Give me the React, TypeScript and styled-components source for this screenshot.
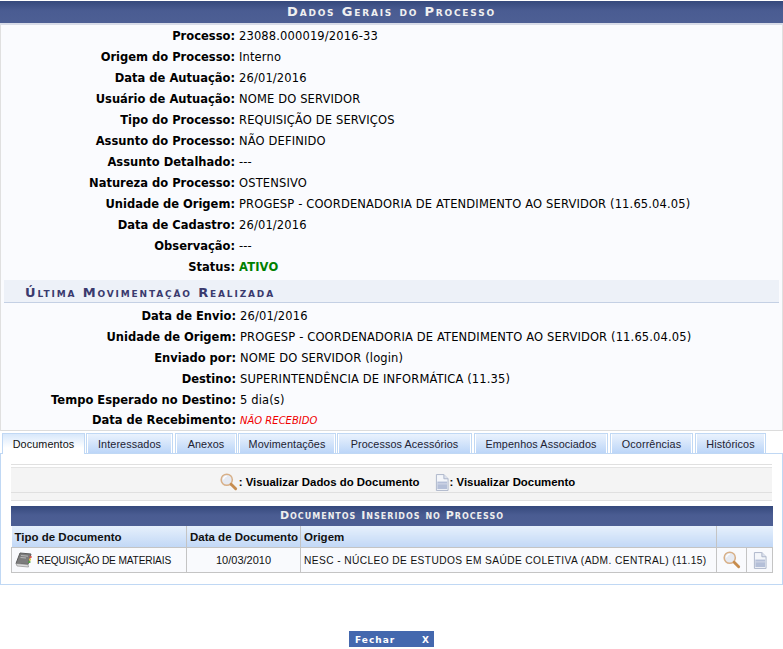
import React from "react";
import styled, { createGlobalStyle } from "styled-components";

const Global = createGlobalStyle`
  html, body { margin: 0; padding: 0; background: #fff; }
  body { font-family: "DejaVu Sans", Verdana, sans-serif; font-size: 11.5px; color: #000; }
`;

const Page = styled.div`
  width: 783px;
  height: 649px;
  overflow: hidden;
  display: flex;
  flex-direction: column;
`;

const Panel = styled.section`
  background: #fafbfe;
  border-right: 1px solid #e0e0e0;
  border-left: 1px solid #e0e0e0;
  border-bottom: 1px solid #dcdcdc;
  height: 430px;
  box-sizing: border-box;
  margin-top: 1px;
`;

const TitleBar = styled.h2`
  margin: 0 -1px;
  height: 22px;
  line-height: 22px;
  text-align: center;
  color: #f0f0f0;
  font-size: 13px;
  font-weight: bold;
  font-variant: small-caps;
  letter-spacing: 1.8px;
  background: linear-gradient(#35497c 0%, #4a5c92 45%, #4d5f94 100%);
  border-bottom: 2px solid #d8dce8;
`;

const Details = styled.dl<{ $label: number }>`
  margin: 0;
  display: grid;
  grid-template-columns: ${(p) => p.$label}px 1fr;
  grid-auto-rows: 21px;
  column-gap: 4px;
  line-height: 22px;
`;

const Label = styled.dt`
  margin: 0;
  font-weight: bold;
  text-align: right;
  white-space: nowrap;
`;

const Value = styled.dd`
  margin: 0;
  white-space: nowrap;
  letter-spacing: 0.14px;
`;

const MovementDetails = styled(Details)`
  & > :nth-last-child(-n + 2) {
    line-height: 20px;
  }
`;

const Active = styled.span`
  color: #008000;
  font-weight: bold;
`;

const NotReceived = styled.span`
  color: #f00000;
  font-style: italic;
  font-size: 10px;
  letter-spacing: 0;
`;

const Subtitle = styled.h3`
  margin: 3px 3px 2px 3px;
  height: 22px;
  line-height: 25px;
  padding-left: 21px;
  font-size: 13px;
  font-weight: bold;
  font-variant: small-caps;
  letter-spacing: 1.85px;
  color: #3a3a6e;
  background: #edf1f8;
  border-bottom: 1px solid #c4d0e4;
`;

const Tabs = styled.div`
  display: flex;
  align-items: flex-end;
  height: 22px;
  padding-left: 2px;
  position: relative;
  z-index: 1;
`;

const Tab = styled.div<{ $active?: boolean; $w: number; $gap: number }>`
  box-sizing: border-box;
  width: ${(p) => p.$w}px;
  margin-right: ${(p) => p.$gap}px;
  height: ${(p) => (p.$active ? 21 : 20)}px;
  margin-bottom: ${(p) => (p.$active ? -1 : 0)}px;
  border: 1px solid #c0d8f4;
  border-bottom: none;
  text-align: center;
  font-family: "Liberation Sans", Arial, sans-serif;
  font-size: 10.8px;
  letter-spacing: 0.1px;
  line-height: 20px;
  color: ${(p) => (p.$active ? "#111" : "#223")};
  background: ${(p) => (p.$active ? "linear-gradient(#d8e8fb, #fff 70%)" : "linear-gradient(#eaf2fd, #bcd6f8)")};
  box-shadow: ${(p) => (p.$active ? "none" : "inset 1px 0 0 #fff, inset -1px 0 0 #fff")};
  white-space: nowrap;
`;

const TabBody = styled.div`
  box-sizing: border-box;
  height: 132px;
  border: 1px solid #c0d8f4;
  padding: 10px 10px 0 10px;
  background: #fff;
`;

const Legend = styled.div`
  box-sizing: border-box;
  height: 37px;
  margin-bottom: 5px;
  padding-top: 2px;
  border-top: 1px solid #e0e0e0;
  border-bottom: 1px solid #e0e0e0;
  background: linear-gradient(#fff 3px, #f4f4f4 3px);
`;

const LegendBar = styled.div`
  box-sizing: border-box;
  height: 26px;
  padding: 4px 0 0 12px;
  display: flex;
  justify-content: center;
  align-items: center;
  gap: 15px;
  background: #f4f4f4;
  border-top: 1px solid #e4e4e4;
  border-bottom: 1px solid #e0e0e0;
  font-family: "Liberation Sans", Arial, sans-serif;
  font-size: 11.4px;
  font-weight: bold;
`;

const LegendItem = styled.span`
  display: inline-flex;
  align-items: center;
  gap: 1px;
`;

const DocTable = styled.table`
  width: 761px;
  border-collapse: collapse;
  table-layout: fixed;
  font-family: "Liberation Sans", Arial, sans-serif;
  font-size: 11px;
`;

const TableCaption = styled.caption`
  height: 20px;
  line-height: 20px;
  text-align: center;
  color: #eee;
  font-family: "DejaVu Sans", Verdana, sans-serif;
  font-size: 11px;
  font-weight: bold;
  font-variant: small-caps;
  letter-spacing: 1px;
  background: linear-gradient(#35497c 0%, #4a5c92 45%, #4d5f94 100%);
`;

const Th = styled.th`
  height: 21px;
  padding: 0 3px;
  text-align: left;
  font-family: "Liberation Sans", Arial, sans-serif;
  font-size: 11.5px;
  font-weight: bold;
  color: #111;
  white-space: nowrap;
  background: linear-gradient(#e6f0fc, #c2d8f6);
  border-left: 1px solid #c4c4c4;
  border-right: 1px solid #c4c4c4;
  border-bottom: 1px solid #c4c4c4;
  &:first-child { border-left: none; }
  &:last-child { border-right: none; }
`;

const Td = styled.td<{ $date?: boolean; $spacing?: number }>`
  height: 25px;
  padding: 0 3px;
  box-sizing: border-box;
  text-align: ${(p) => (p.$date ? "center" : "left")};
  white-space: nowrap;
  background: #f9fafd;
  color: #111;
  border: 1px solid #c4c4c4;
  border-top: none;
  font-size: ${(p) => (p.$date ? 11 : 10.2)}px;
  letter-spacing: ${(p) => p.$spacing ?? 0}px;
`;

const IconCell = styled(Td)`
  padding: 0;
  text-align: center;
  svg { display: block; margin: 0 auto; }
`;

const TypeCell = styled.span`
  display: flex;
  align-items: center;
  gap: 4px;
`;

const Footer = styled.div`
  display: flex;
  justify-content: center;
  margin-top: 46px;
`;

const CloseButton = styled.button`
  width: 85px;
  height: 16px;
  margin: 0;
  padding: 1px 4px 0 6px;
  border: none;
  background: #4468ae;
  color: #fff;
  display: flex;
  justify-content: space-between;
  align-items: center;
  font-family: "DejaVu Sans", Verdana, sans-serif;
  font-size: 9px;
  font-weight: bold;
  letter-spacing: 1px;
`;

const Magnifier = () => (
  <svg width="18" height="18" viewBox="0 0 20 20">
    <circle cx="7.5" cy="7.5" r="6.2" fill="#e6eaf2" stroke="#d8b088" strokeWidth="1.7" />
    <path d="M3.8 7 A4 4 0 0 1 7.5 3.6" fill="none" stroke="#fff" strokeWidth="1.3" />
    <path d="M12.4 12.4 L17.4 17.4" stroke="#c68c4e" strokeWidth="3.2" strokeLinecap="round" />
  </svg>
);

const DocIcon = () => (
  <svg width="14" height="17" viewBox="0 0 15 18">
    <path d="M1.5 .5 H9.5 L14 5 V17.5 H1.5 Z" fill="#f4f6fa" stroke="#aab4c8" />
    <path d="M9.5 .5 V5 H14" fill="#dce2ee" stroke="#aab4c8" />
    <rect x="2.5" y="8" width="10.5" height="8" fill="#b4bfd8" />
    <rect x="2.5" y="10" width="10.5" height="1" fill="#d6dcea" />
  </svg>
);

const BookIcon = () => (
  <svg width="18" height="16" viewBox="0 0 18 16">
    <path d="M5 1 L16 2 L13 12.5 L1 11.5 Z" fill="#7c7c7c" stroke="#5c5c5c" />
    <path d="M1 11.5 L13 12.5 L13.5 15 L2 14 Z" fill="#dcdcdc" stroke="#808080" strokeWidth=".6" />
    <path d="M6 3.5 L13 4.2 M5.5 5.5 L11 6" stroke="#b8b8b8" />
    <rect x="14.6" y="4" width="2" height="2" fill="#d9534f" />
    <rect x="14" y="6.5" width="2" height="2" fill="#e8c440" />
    <rect x="13.4" y="9" width="2" height="2" fill="#5aa84a" />
  </svg>
);

const general: [string, React.ReactNode][] = [
  ["Processo:", "23088.000019/2016-33"],
  ["Origem do Processo:", "Interno"],
  ["Data de Autuação:", "26/01/2016"],
  ["Usuário de Autuação:", "NOME DO SERVIDOR"],
  ["Tipo do Processo:", "REQUISIÇÃO DE SERVIÇOS"],
  ["Assunto do Processo:", "NÃO DEFINIDO"],
  ["Assunto Detalhado:", "---"],
  ["Natureza do Processo:", "OSTENSIVO"],
  ["Unidade de Origem:", "PROGESP - COORDENADORIA DE ATENDIMENTO AO SERVIDOR (11.65.04.05)"],
  ["Data de Cadastro:", "26/01/2016"],
  ["Observação:", "---"],
  ["Status:", <Active>ATIVO</Active>],
];

const movement: [string, React.ReactNode][] = [
  ["Data de Envio:", "26/01/2016"],
  ["Unidade de Origem:", "PROGESP - COORDENADORIA DE ATENDIMENTO AO SERVIDOR (11.65.04.05)"],
  ["Enviado por:", "NOME DO SERVIDOR (login)"],
  ["Destino:", "SUPERINTENDÊNCIA DE INFORMÁTICA (11.35)"],
  ["Tempo Esperado no Destino:", "5 dia(s)"],
  ["Data de Recebimento:", <NotReceived>NÃO RECEBIDO</NotReceived>],
];

const tabs: [string, number, number][] = [
  ["Documentos", 83, 1],
  ["Interessados", 87, 2],
  ["Anexos", 62, 1],
  ["Movimentações", 98, 1],
  ["Processos Acessórios", 135, 2],
  ["Empenhos Associados", 134, 2],
  ["Ocorrências", 83, 2],
  ["Históricos", 71, 0],
];

const renderRows = (rows: [string, React.ReactNode][]) =>
  rows.map(([k, v]) => (
    <React.Fragment key={k}>
      <Label>{k}</Label>
      <Value>{v}</Value>
    </React.Fragment>
  ));

export default function App() {
  return (
    <Page>
      <Global />
      <Panel>
        <TitleBar>Dados Gerais do Processo</TitleBar>
        <Details $label={234}>{renderRows(general)}</Details>
        <Subtitle>Última Movimentação Realizada</Subtitle>
        <MovementDetails $label={235}>{renderRows(movement)}</MovementDetails>
      </Panel>
      <Tabs>
        {tabs.map(([t, w, g], i) => (
          <Tab key={t} $active={i === 0} $w={w} $gap={g}>{t}</Tab>
        ))}
      </Tabs>
      <TabBody>
        <Legend>
          <LegendBar>
            <LegendItem><Magnifier />: Visualizar Dados do Documento</LegendItem>
            <LegendItem><DocIcon />: Visualizar Documento</LegendItem>
          </LegendBar>
        </Legend>
        <DocTable>
          <TableCaption>Documentos Inseridos no Processo</TableCaption>
          <colgroup>
            <col width="175" />
            <col width="114" />
            <col width="416" />
            <col width="30" />
            <col width="26" />
          </colgroup>
          <thead>
            <tr>
              <Th>Tipo de Documento</Th>
              <Th>Data de Documento</Th>
              <Th>Origem</Th>
              <Th colSpan={2} />
            </tr>
          </thead>
          <tbody>
            <tr>
              <Td $spacing={-0.17}><TypeCell><BookIcon />REQUISIÇÃO DE MATERIAIS</TypeCell></Td>
              <Td $date>10/03/2010</Td>
              <Td $spacing={0.4}>NESC - NÚCLEO DE ESTUDOS EM SAÚDE COLETIVA (ADM. CENTRAL) (11.15)</Td>
              <IconCell><Magnifier /></IconCell>
              <IconCell><DocIcon /></IconCell>
            </tr>
          </tbody>
        </DocTable>
      </TabBody>
      <Footer>
        <CloseButton><span>Fechar</span><span>X</span></CloseButton>
      </Footer>
    </Page>
  );
}
